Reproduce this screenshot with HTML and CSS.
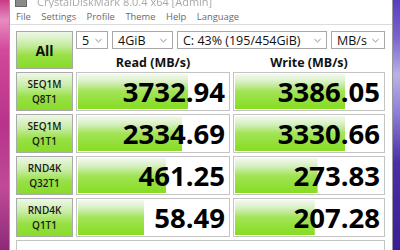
FILE: index.html
```html
<!DOCTYPE html>
<html lang="en">
<head>
    <meta charset="UTF-8">
    <title>CrystalDiskMark</title>
    <link rel="stylesheet" href="styles.css">
</head>
<body>
    <div class="desk-left"></div>
    <div class="window">
        <!-- Title bar (mostly cut off at the top) -->
        <div class="titlebar">
            <span class="app-icon"></span>
            <span class="title">CrystalDiskMark 8.0.4 x64 [Admin]</span>
        </div>

        <!-- Menu -->
        <div class="menubar">
            <span>File</span>
            <span>Settings</span>
            <span>Profile</span>
            <span>Theme</span>
            <span>Help</span>
            <span>Language</span>
        </div>

        <div class="bench">
            <div class="all-btn">All</div>
            <div class="selects">
                <div class="select w-count">5<svg class="chev" viewBox="0 0 8 5"><path d="M0.5 0.8 L4 4.2 L7.5 0.8" /></svg></div>
                <div class="select w-size">4GiB<svg class="chev" viewBox="0 0 8 5"><path d="M0.5 0.8 L4 4.2 L7.5 0.8" /></svg></div>
                <div class="select w-drive">C: 43% (195/454GiB)<svg class="chev" viewBox="0 0 8 5"><path d="M0.5 0.8 L4 4.2 L7.5 0.8" /></svg></div>
                <div class="select w-unit">MB/s<svg class="chev" viewBox="0 0 8 5"><path d="M0.5 0.8 L4 4.2 L7.5 0.8" /></svg></div>
            </div>
            <div class="head">Read (MB/s)</div>
            <div class="head">Write (MB/s)</div>

            <div class="label">SEQ1M<br>Q8T1</div>
            <div class="value" style="--w: 75%">3732.94</div>
            <div class="value" style="--w: 76%">3386.05</div>

            <div class="label">SEQ1M<br>Q1T1</div>
            <div class="value" style="--w: 71%">2334.69</div>
            <div class="value" style="--w: 76%">3330.66</div>

            <div class="label">RND4K<br>Q32T1</div>
            <div class="value" style="--w: 60%">461.25</div>
            <div class="value" style="--w: 57%">273.83</div>

            <div class="label">RND4K<br>Q1T1</div>
            <div class="value" style="--w: 45%">58.49</div>
            <div class="value" style="--w: 55%">207.28</div>

            <div class="comment"></div>
        </div>
    </div>
    <div class="desk-right"></div>
</body>
</html>
```

FILE: styles.css
```css
body, html {
    margin: 0;
    padding: 0;
    height: 250px;
    overflow: hidden;
    font-family: 'Open Sans', 'Noto Sans', sans-serif;
}

body {
    display: flex;
}

.desk-left {
    width: 9px;
    background: linear-gradient(to bottom, #c73a86 0%, #e78cc0 8%, #d2489a 20%, #b7338a 50%, #c04a98 75%, #8c2a78 100%);
}

.desk-right {
    flex: 1;
    background: linear-gradient(to bottom, #5a3cc4 0%, #7a64d0 15%, #b9b2e6 30%, #8e7fd8 45%, #4a2ea8 65%, #3a1e96 100%);
}

.window {
    width: 384px;
    box-sizing: border-box;
    border-left: 1px solid #9a9a9a;
    border-right: 1px solid #9a9a9a;
    background: #fff;
    display: flex;
    flex-direction: column;
    overflow: hidden;
}

.titlebar {
    flex: none;
    height: 8px;
    overflow: hidden;
    display: flex;
    align-items: flex-end;
    padding-left: 5px;
    font-size: 11px;
    color: #a8a8a8;
}

.app-icon {
    width: 10px;
    height: 10px;
    margin-bottom: 1px;
    background: #8a8a8a;
    border: 1px solid #666;
    flex: none;
}

.title {
    margin-left: 10px;
    line-height: 11px;
    margin-bottom: 1px;
    filter: blur(0.5px);
}

.menubar {
    flex: none;
    height: 16px;
    border-bottom: 1px solid #dcdcdc;
    display: flex;
    align-items: center;
    gap: 10.5px;
    padding: 1px 0 0 6px;
    box-sizing: border-box;
    height: 17px;
    font-size: 9.4px;
    color: #6a6a6a;
}

.bench {
    flex: none;
    display: grid;
    grid-template-columns: 57px 154px 152px;
    grid-template-rows: 18px 17px repeat(4, 39px) 20px;
    column-gap: 3px;
    row-gap: 3px;
    padding: 6px 0 0 6px;
}

.all-btn {
    grid-row: 1 / 3;
    box-sizing: border-box;
    border: 1px solid #a8a8a8;
    background: linear-gradient(to bottom, #eef8e8 0%, #c8eca4 35%, #98e046 65%, #86dc26 100%);
    display: flex;
    align-items: center;
    justify-content: center;
    font-weight: 700;
    font-size: 14px;
    color: #111;
}

.selects {
    grid-column: 2 / 4;
    display: flex;
    gap: 4px;
}

.select {
    box-sizing: border-box;
    height: 18px;
    border: 1px solid #a8a8a8;
    background: #fff;
    display: flex;
    align-items: center;
    padding-left: 5px;
    font-size: 12.5px;
    color: #111;
}

.chev {
    width: 7px;
    height: 5px;
    margin-left: auto;
    margin-right: 5px;
    fill: none;
    stroke: #777;
    stroke-width: 1;
}

.w-count { width: 32px; }
.w-size { width: 61px; }
.w-drive { width: 150px; }
.w-unit { width: 54px; }

.head {
    font-weight: 700;
    font-size: 12.5px;
    text-align: center;
    line-height: 17px;
    padding-top: 2px;
    color: #111;
}

.label {
    box-sizing: border-box;
    border: 1px solid #aaaaaa;
    background: linear-gradient(to bottom, #eef8e8 0%, #c8eca4 35%, #98e046 65%, #88dc28 100%);
    display: flex;
    align-items: center;
    justify-content: center;
    text-align: center;
    font-weight: 600;
    font-size: 10px;
    line-height: 15px;
    color: #1a1a1a;
}

.value {
    box-sizing: border-box;
    border: 1px solid #c4c4c4;
    background-color: #fff;
    background-image: linear-gradient(to bottom, #f4f9f0 0%, #d8f0c4 22%, #a2e456 50%, #86dc22 100%);
    background-repeat: no-repeat;
    background-size: var(--w) 100%;
    background-origin: content-box;
    padding: 1px;
    display: flex;
    align-items: center;
    justify-content: flex-end;
    padding-right: 4px;
    font-weight: 700;
    font-size: 27.5px;
    color: #000;
}

.comment {
    grid-column: 1 / 4;
    border: 1px solid #c4c4c4;
    background: #fff;
}
```
